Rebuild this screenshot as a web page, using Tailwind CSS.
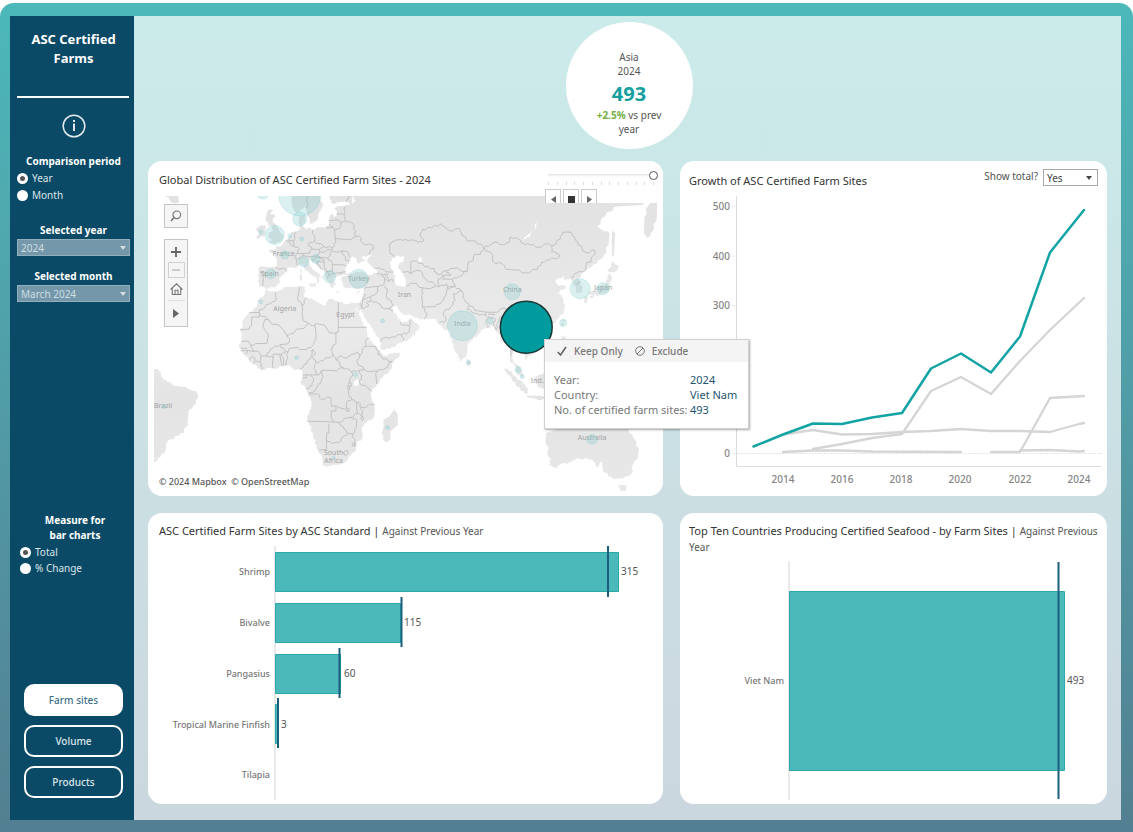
<!DOCTYPE html>
<html lang="en">
<head>
<meta charset="utf-8">
<meta name="viewport" content="width=device-width, initial-scale=1">
<title>ASC Certified Farms</title>
<script src="https://cdn.jsdelivr.net/npm/@tailwindcss/browser@4"></script>
</head>
<body class="bg-white pt-[3px] font-['Noto_Sans','Open_Sans',sans-serif] text-[10px] text-[#555]">
<div class="flex min-h-[calc(100vh-3px)] rounded-t-[14px] bg-linear-to-b from-[#4bb8b9] to-[#527f91] pt-[13px] pr-3 pb-3 pl-[10px]">

  <!-- Sidebar -->
  <aside class="flex w-[124px] shrink-0 flex-col bg-[#0b4a66] pt-[14px] pr-1 pb-[22px] pl-[7px] text-white">
    <h1 class="text-center text-[13px] leading-[19px] font-bold">ASC Certified Farms</h1>
    <hr class="mt-[28px] w-[112px] border-t-2 border-white">
    <button type="button" aria-label="Information" class="mt-4 self-center">
      <svg class="size-6" viewBox="0 0 24 24" fill="none" stroke="#dfe8ec"><circle cx="12" cy="12" r="10.8" stroke-width="1.5"/><path d="M12 9.5v7.5" stroke-width="2"/><path d="M12 6v2" stroke-width="2"/></svg>
    </button>
    <fieldset class="mt-4">
      <legend class="w-full text-center leading-[15px] font-bold">Comparison period</legend>
      <label class="mt-px flex h-[17px] items-center gap-1 text-[#dbe5ea]"><input type="radio" name="period" checked class="size-[11px] appearance-none rounded-full bg-white checked:border-[3px] checked:border-white checked:bg-[#555]">Year</label>
      <label class="flex h-[17px] items-center gap-1 text-[#dbe5ea]"><input type="radio" name="period" class="size-[11px] appearance-none rounded-full bg-white checked:border-[3px] checked:border-white checked:bg-[#555]">Month</label>
    </fieldset>
    <label for="year" class="mt-[19px] text-center leading-[15px] font-bold">Selected year</label>
    <div class="relative mt-px">
      <select id="year" class="h-[17px] w-full appearance-none border border-[#94afbc] bg-[#7498aa] px-[3px] text-[10px] leading-[14px] text-[#cfdde3]"><option>2024</option></select>
      <svg class="pointer-events-none absolute top-[7px] right-1 h-1 w-[6px]" viewBox="0 0 6 4"><path d="M0 0h6L3 4z" fill="#d5e0e5"/></svg>
    </div>
    <label for="month" class="mt-[13px] text-center leading-[15px] font-bold">Selected month</label>
    <div class="relative mt-px">
      <select id="month" class="h-[17px] w-full appearance-none border border-[#94afbc] bg-[#7498aa] px-[3px] text-[10px] leading-[14px] text-[#cfdde3]"><option>March 2024</option></select>
      <svg class="pointer-events-none absolute top-[7px] right-1 h-1 w-[6px]" viewBox="0 0 6 4"><path d="M0 0h6L3 4z" fill="#d5e0e5"/></svg>
    </div>
    <fieldset class="mt-[211px] pl-[3px]">
      <legend class="w-full text-center leading-[15px] font-bold">Measure for<br>bar charts</legend>
      <label class="mt-px flex h-4 items-center gap-1 text-[#dbe5ea]"><input type="radio" name="measure" checked class="size-[11px] appearance-none rounded-full bg-white checked:border-[3px] checked:border-white checked:bg-[#555]">Total</label>
      <label class="flex h-4 items-center gap-1 text-[#dbe5ea]"><input type="radio" name="measure" class="size-[11px] appearance-none rounded-full bg-white checked:border-[3px] checked:border-white checked:bg-[#555]">% Change</label>
    </fieldset>
    <nav class="mt-auto flex flex-col gap-[9px] px-[7px]">
      <button type="button" class="h-8 rounded-[10px] bg-white font-medium text-[#3d7288]">Farm sites</button>
      <button type="button" class="h-8 rounded-[10px] border-2 border-white font-medium text-[#dbe5ea]">Volume</button>
      <button type="button" class="h-8 rounded-[10px] border-2 border-white font-medium text-[#dbe5ea]">Products</button>
    </nav>
  </aside>

  <main class="min-w-0 flex-1 bg-linear-to-b from-[#cbebea] to-[#cbd7df] px-[14px] pb-[15px]">
    <div class="flex h-[145px] justify-center pt-[6px] pl-[3px]">
      <div class="flex size-[127px] flex-col items-center rounded-full bg-white pt-[28px] text-center leading-[14px]">
        <span>Asia</span>
        <span>2024</span>
        <strong class="mt-1 text-[20px] leading-6 text-[#139fa0]">493</strong>
        <p class="mt-[2px] w-[84px]"><b class="text-[#76b043]">+2.5%</b> vs prev year</p>
      </div>
    </div>

    <div class="grid grid-cols-[515fr_427fr] gap-[17px]">

      <!-- Map card -->
      <section class="relative rounded-[14px] bg-white px-[6px] pb-1">
        <h2 class="flex h-[35px] items-center pt-1 pl-[5px] text-[11px] text-[#333]">Global Distribution of ASC Certified Farm Sites - 2024</h2>
        <div class="relative">
          <svg id="map" class="block h-auto w-full" viewBox="154 196 504 296" role="img" aria-label="World map of certified farm sites">
            <linearGradient id="shade" gradientUnits="userSpaceOnUse" x1="0" y1="196" x2="0" y2="492"><stop offset="0" stop-color="#e2e2e2"/><stop offset=".45" stop-color="#eaeaea"/><stop offset=".7" stop-color="#e4e4e4"/><stop offset="1" stop-color="#e8e8e8"/></linearGradient>
            <g id="land" fill="url(#shade)"></g>
            <g id="water" fill="#fff"></g>
            <g id="borders" fill="none" stroke="#bebebe" stroke-width="0.9" stroke-linejoin="round"></g>
            <g fill="#a3a3a3" font-size="7" text-anchor="middle">
              <text x="284" y="256">France</text><text x="270" y="276">Spain</text><text x="359" y="281">Turkey</text>
              <text x="285" y="311">Algeria</text><text x="346" y="317">Egypt</text><text x="405" y="297">Iran</text>
              <text x="513" y="292">China</text><text x="463" y="326">India</text><text x="604" y="290">Japan</text>
              <text x="163" y="408">Brazil</text><text x="593" y="440">Australia</text><text x="538" y="383">Ind.</text>
              <text x="334" y="456">South</text><text x="334" y="464">Africa</text>
            </g>
            <g id="sites" fill="#7fcccc" fill-opacity="0.28" stroke="#7fcccc" stroke-opacity="0.3"></g>
            <circle cx="527" cy="327.500" r="26" fill="#009b9c" stroke="#1c3536" stroke-width="1.500"/>
          </svg>

          <button type="button" aria-label="Search" class="absolute top-[8px] left-[10px] grid size-6 place-items-center border border-[#c4c4c4] bg-[#f5f5f5]">
            <svg class="size-3" viewBox="0 0 12 12" fill="none" stroke="#777" stroke-width="1.2"><circle cx="6.800" cy="4.800" r="3.800"/><path d="M4 7.500 1 11" stroke-width="1.600"/></svg>
          </button>
          <div class="absolute top-[43px] left-[10px] flex h-[88px] w-6 flex-col items-center border border-[#c4c4c4] bg-[#f5f5f5] pt-[3px]">
            <button type="button" aria-label="Zoom in" class="grid h-[17px] w-4 place-items-center"><svg class="size-[10px]" viewBox="0 0 10 10"><path d="M5 0v10M0 5h10" stroke="#666" stroke-width="1.800"/></svg></button>
            <button type="button" aria-label="Zoom out" class="mt-[2px] grid h-4 w-[17px] place-items-center border border-[#d2d2d2]"><svg class="h-2 w-2" viewBox="0 0 8 8"><path d="M0 4h8" stroke="#bbb" stroke-width="1.500"/></svg></button>
            <button type="button" aria-label="Reset map" class="grid h-[22px] w-full place-items-center"><svg class="h-3 w-[13px]" viewBox="0 0 13 12" fill="none" stroke="#777" stroke-width="1.100"><path d="M.6 6.500 6.500.8l5.900 5.700M2.300 5.500v6h8.400v-6M5 11.500V7.200h3v4.300"/></svg></button>
            <button type="button" aria-label="Map tools" class="grid h-[25px] w-[17px] place-items-center border-t border-[#ddd]"><svg class="h-[9px] w-[6px]" viewBox="0 0 6 9"><path d="M0 0 6 4.500 0 9z" fill="#666"/></svg></button>
          </div>
          <p class="absolute bottom-[2px] left-1 bg-white/50 px-px text-[9px] leading-[14px] font-medium">© 2024 Mapbox&nbsp; © OpenStreetMap</p>

          <!-- Mark tooltip -->
          <div class="absolute top-[143px] left-[390px] z-10 w-[205px] border border-[#d0d0d0] bg-white text-[11px] text-[#777] shadow-[1px_1px_2px_#0005]">
            <div class="flex h-[22px] items-center bg-[#f4f4f4] pl-3 text-[10px] font-medium">
              <button type="button" class="flex items-center gap-[7px]"><svg class="size-[10px]" viewBox="0 0 10 10" fill="none" stroke="#666" stroke-width="1.600"><path d="M.8 6 3.500 9 9 1"/></svg>Keep Only</button>
              <button type="button" class="ml-3 flex items-center gap-[7px]"><svg class="size-[10px]" viewBox="0 0 10 10" fill="none" stroke="#777"><circle cx="5" cy="5" r="4.300"/><path d="m2 8 6-6"/></svg>Exclude</button>
            </div>
            <dl class="grid grid-cols-[136px_1fr] px-[9px] pt-[10px] pb-[11px] leading-[15px] whitespace-nowrap">
              <dt>Year:</dt><dd class="text-[#1d5570]">2024</dd>
              <dt>Country:</dt><dd class="text-[#1d5570]">Viet Nam</dd>
              <dt>No. of certified farm sites:</dt><dd class="text-[#1d5570]">493</dd>
            </dl>
          </div>
        </div>

        <!-- Year player, laid over the top right corner of the map -->
        <div class="absolute top-0 right-0 h-[42px] w-[118px] overflow-hidden rounded-tr-[14px] bg-white">
          <div class="relative mt-[10px] mr-[5px] h-[9px]">
            <input type="range" aria-label="Year" min="2012" max="2024" value="2024" class="ml-[3px] block h-[9px] w-[110px] appearance-none bg-linear-to-b from-transparent from-[3px] via-[#e2e2e2] via-[3px] to-transparent to-[6px] [&::-webkit-slider-thumb]:size-[9px] [&::-webkit-slider-thumb]:appearance-none [&::-webkit-slider-thumb]:rounded-full [&::-webkit-slider-thumb]:border [&::-webkit-slider-thumb]:border-[#555] [&::-webkit-slider-thumb]:bg-white">
          </div>
          <div class="mt-[2px] mr-[9px] ml-[3px] flex h-[3px] justify-between" aria-hidden="true">
            <i class="w-px bg-[#ddd]"></i><i class="w-px bg-[#ddd]"></i><i class="w-px bg-[#ddd]"></i><i class="w-px bg-[#ddd]"></i><i class="w-px bg-[#ddd]"></i><i class="w-px bg-[#ddd]"></i><i class="w-px bg-[#ddd]"></i><i class="w-px bg-[#ddd]"></i><i class="w-px bg-[#ddd]"></i><i class="w-px bg-[#ddd]"></i><i class="w-px bg-[#ddd]"></i><i class="w-px bg-[#ddd]"></i><i class="w-px bg-[#ddd]"></i>
          </div>
          <div class="mt-1 flex gap-[2px]">
            <button type="button" aria-label="Previous" class="grid h-5 w-4 place-items-center border border-[#ccc]"><svg class="h-[7px] w-[5px]" viewBox="0 0 5 7"><path d="M5 0v7L0 3.500z" fill="#666"/></svg></button>
            <button type="button" aria-label="Stop" class="grid h-5 w-4 place-items-center border border-[#ccc]"><svg class="size-[7px]" viewBox="0 0 7 7"><path d="M0 0h7v7H0z" fill="#333"/></svg></button>
            <button type="button" aria-label="Next" class="grid h-5 w-4 place-items-center border border-[#ccc]"><svg class="h-[7px] w-[5px]" viewBox="0 0 5 7"><path d="M0 0v7l5-3.500z" fill="#666"/></svg></button>
          </div>
        </div>
      </section>

      <!-- Growth card -->
      <section class="rounded-[14px] bg-white">
        <div class="flex h-[35px] items-start justify-between pr-[9px] pl-[9px]">
          <h2 class="pt-3 text-[11px] leading-4 text-[#333]">Growth of ASC Certified Farm Sites</h2>
          <div class="flex items-start gap-[5px] pt-2">
            <label for="total" class="leading-[14px]">Show total?</label>
            <div class="relative">
              <select id="total" class="block h-[17px] w-[55px] appearance-none border border-[#aaa] bg-white px-[3px] text-[10px] leading-[14px] text-[#444]"><option>Yes</option></select>
              <svg class="pointer-events-none absolute top-[7px] right-[6px] h-1 w-[6px]" viewBox="0 0 6 4"><path d="M0 0h6L3 4z" fill="#444"/></svg>
            </div>
          </div>
        </div>
        <svg class="block h-auto w-full" viewBox="0 0 427 300" role="img" aria-label="Certified farm sites by year">
          <g stroke="#dcdcdc"><path d="M56.500 0v270.500H421" fill="none"/><path d="M52 10.500h4M52 60h4M52 109.500h4M52 257.500h4" stroke="#eee"/><path d="M57 257.500h365" stroke="#e6e6e6" stroke-dasharray="2 1"/></g>
          <g fill="#858585" font-size="10" font-weight="500" text-anchor="end"><text x="50" y="14">500</text><text x="50" y="64">400</text><text x="50" y="113">300</text><text x="50" y="261">0</text></g>
          <g fill="#858585" font-size="10" font-weight="500" text-anchor="middle"><text x="103" y="287">2014</text><text x="162" y="287">2016</text><text x="221" y="287">2018</text><text x="280" y="287">2020</text><text x="340" y="287">2022</text><text x="399" y="287">2024</text></g>
          <g fill="none" stroke="#d5d5d5" stroke-width="2.300" stroke-linecap="round" stroke-linejoin="round">
            <path d="M133 253 162 248 192 242 222 238 251 195 281 181 311 198 340 165 370 134 404 102"/>
            <path d="M103 238.500 133 234 162 238.500 192 238 222 236 251 235 281 233 311 235 340 235 370 236 399 228 404 227"/>
            <path d="M311 256H340L370 202 404 200"/>
            <path d="M103 256 133 254.500 162 254.500 192 255.500 281 256"/>
            <path d="M340 254.500 370 254 399 255.500 404 255"/>
            <path d="M73.500 250.500 103 238.500 133 227.500 162 228 192 221.500 222 217 251 172.500 281 157.500 311 176.500 340 140.500 370 56.500 404 14" stroke="#12a3a4" stroke-width="2.500"/>
          </g>
        </svg>
      </section>

      <!-- Standards card -->
      <section class="rounded-[14px] bg-white">
        <h2 class="h-[32px] pt-[10px] pl-[11px] text-[11px] leading-4 text-[#333]">ASC Certified Farm Sites by ASC Standard | <span class="text-[10px] text-[#555]">Against Previous Year</span></h2>
        <svg class="block h-auto w-full" viewBox="148 545 515 259" role="img" aria-label="Farm sites by ASC standard">
          <path d="M275 546v254" stroke="#e2e2e2" stroke-width="1.500"/>
          <g fill="#4bb8ba" stroke="#2aa9aa"><path d="M275.500 552.500h343v39h-343zM275.500 603.500h125v39h-125zM275.500 654.500h65v39h-65zM275.500 704.500h3v39h-3z"/></g>
          <path d="M608 546v51M401.500 597v50M339.500 648v50M278 698v50" stroke="#1a5f7c" stroke-width="2"/>
          <g font-size="9" font-weight="500" fill="#777" text-anchor="end"><text x="270" y="575">Shrimp</text><text x="270" y="626">Bivalve</text><text x="270" y="677">Pangasius</text><text x="270" y="728">Tropical Marine Finfish</text><text x="270" y="778">Tilapia</text></g>
          <g font-size="10" fill="#555"><text x="621" y="575">315</text><text x="404" y="626">115</text><text x="344" y="677">60</text><text x="281" y="728">3</text></g>
        </svg>
      </section>

      <!-- Countries card -->
      <section class="rounded-[14px] bg-white">
        <h2 class="h-[47px] pt-[10px] pr-2 pl-[9px] text-[11px] leading-4 text-[#333]">Top Ten Countries Producing Certified Seafood - by Farm Sites | <span class="text-[10px] text-[#555]">Against Previous Year</span></h2>
        <svg class="block h-auto w-full" viewBox="680 560 427 244" role="img" aria-label="Top countries by farm sites">
          <path d="M789 561v239" stroke="#e2e2e2" stroke-width="1.500"/>
          <path d="M789.500 591.500h275v179h-275z" fill="#4bb8ba" stroke="#2aa9aa"/>
          <path d="M1058.500 562v237" stroke="#1a5f7c" stroke-width="2"/>
          <text x="784" y="684" font-size="9" font-weight="500" fill="#777" text-anchor="end">Viet Nam</text><text x="1067" y="684" font-size="10" fill="#555">493</text>
        </svg>
      </section>
    </div>
  </main>
</div>

<script>
// Outlines are lists of "lon,lat" pairs, drawn in a Mercator projection.
const project = (lon, lat) => [280 + 2.345 * lon, 380.5 - 134.4 * Math.log(Math.tan(Math.PI / 4 + lat * Math.PI / 360))];
// Slanted segments get two small bends so that they read as natural coast or river lines.
const rough = pts => pts.flatMap(([x, y], i) => {
  if (!i) return [[x, y]];
  const [px, py] = pts[i - 1], dx = x - px, dy = y - py;
  if (Math.abs(dx) < 1.2 || Math.abs(dy) < 1.2) return [[x, y]];
  const k = i % 2 ? 0.1 : -0.1;
  return [[px + dx * 0.3 - dy * k, py + dy * 0.3 + dx * k], [px + dx * 0.65 + dy * k, py + dy * 0.65 - dx * k], [x, y]];
});
const toPath = (s, closed) => 'M' + rough(s.trim().split(/\s+/).map(p => project(...p.split(',').map(Number)))).map(p => p.map(v => v.toFixed(1)).join(' ')).join('L') + (closed ? 'Z' : '');
const land = [
'5,66 5,62 5,60.5 5.5,59 7,58 8.5,58.3 10.5,59.3 11.2,59 11.5,58 12.8,56 13,55.4 14.3,55.5 16,56.3 16.7,57.8 17.5,58.8 18.8,59.8 17.2,60.7 17.3,62 18,63 22,66 21.3,63 21.3,61 22.8,59.9 25,60.2 28,60.5 30,59.9 28,59.5 24.5,59.4 23.5,58.8 24.4,58.3 24.2,57.2 23.3,57 22.6,57.7 21.5,57.4 21,56.2 21,55.2 19.8,54.5 18.6,54.5 16.5,54.5 14.2,53.9 12.5,54.4 11,54 10.8,54.4 9.9,54.9 10.9,56.4 10.5,57.6 8.2,56.8 8.1,55.5 8.9,54 7,53.5 5,53.3 4,52 3.5,51.4 1.6,50.8 1.5,50.1 0.2,49.6 -1.2,49.4 -1.8,49.7 -1.5,48.7 -4.7,48.5 -4.2,47.9 -2.5,47.3 -1.2,46 -1.3,44 -1.8,43.4 -4,43.4 -8,43.7 -9.2,43 -8.8,41.5 -9.4,38.8 -8.8,38.3 -8.9,37 -7,37.2 -6.2,36.4 -5.4,36.1 -4.5,36.7 -2.2,36.8 -0.7,37.7 0.1,38.7 -0.3,39.5 1,41 3.2,41.9 3.1,43 4.5,43.4 6.5,43.1 8.2,44 9,44.4 10.2,43.9 10.5,42.9 12.3,41.7 14,40.8 15.7,40 16.1,38.8 15.7,38 16.5,38.4 17.1,39 16.6,39.7 17,40.5 18.4,39.9 18.4,40.3 16,41.6 16,41.9 14.2,42.4 13.5,43.6 12.4,44.3 12.4,45.4 13.7,45.7 13.7,45 15,44.8 15.2,44.2 16.5,43.4 18.5,42.4 19.5,41.6 19.4,40.6 20.3,39.4 21.3,38.2 21.6,36.9 22.5,36.5 23.1,36.5 23,37.5 24,37.7 23.2,38.8 22.8,39.4 23.5,40.2 24.2,40.4 26,40.9 28,41 29,41 26.2,40 26.7,38.5 27.3,37 29,36.3 30.6,36.8 32.5,36.1 34,36.3 36,36.7 35.8,35 35,33 34.3,31.4 32.5,31.2 31,31.5 29,30.9 25,31.6 23,32.6 21.6,32.9 20,32 20,30.8 19,30.3 17,31 15.4,32.2 13,32.9 11,33.3 10,34.2 11,35.3 10.5,36.5 10.9,37 9.7,37.3 7,37 3,36.9 0,35.9 -2,35.1 -5.3,35.8 -6,35.8 -6.8,34 -9,32.5 -9.8,30.5 -11.5,28.2 -13.5,27.5 -15,25.5 -17,21 -16.2,19.5 -16.5,16 -17.5,14.7 -16.7,12.5 -15,10.8 -13.3,9 -13,8 -11.3,6.8 -7.6,4.4 -4,5.2 -2,4.8 1,5.9 4.3,6.4 6,4.3 8.5,4.7 9.5,4 9.8,2.5 9.3,0 8.8,-0.8 11,-3.5 12.2,-5.8 13.2,-8.6 13.8,-10.8 12.6,-13 11.8,-16.5 12.5,-18.5 14.4,-22.4 15,-26.2 16.5,-28.6 18.2,-31.8 18.4,-34 20,-34.8 22.5,-34 25.7,-34 28,-33 30.5,-30.5 32.5,-28.5 32.9,-26 35.4,-24 35.4,-22 34.8,-20 37,-17.8 40,-16 40.6,-14.5 40.5,-10.8 39.4,-8 38.8,-6.2 39.3,-4.6 41.5,-1.8 44,1.2 47,4 49,8 51.2,10.5 51.2,11.9 48,11.2 44.5,10.4 43.2,11.7 43.2,12.4 40,15 37.5,18.5 37.2,21 35.6,24 34,26.5 32.6,29.8 33.5,28.5 34.3,27.9 35,29.5 34.9,28 37,25 39,22 40.8,19.8 42.7,16.5 43.5,12.9 45,12.9 48,14 52,15.7 55,17.2 57.8,19 59.8,22.4 58.5,23.7 56.5,24.7 56.3,26.2 54.5,24.2 51.7,24.1 51.4,25.8 50.8,25 50,26.6 48.5,28.5 48,30 50,30.2 51,28.5 53,26.8 56,27 57.3,25.7 61,25.2 66.5,25.3 67.3,24 69,22.3 70.5,20.8 72.7,21 72.8,19 73.5,16 74.8,13 76.4,9.5 77.5,8.1 78.2,9 79.8,10.3 80.2,13.5 80.2,15.5 82.3,16.7 85,19.5 87,21.4 89,21.8 91,22.6 92.3,20.8 94.3,18.3 94.3,16 96.5,16.6 97.6,16.5 98.6,12 98.3,8.3 100.3,6.2 101.3,2.9 103.5,1.3 104.2,1.4 103.4,4.5 102,6.2 100.4,7.3 99.2,9.3 99.8,11.5 100,13.4 101,13.3 102.5,12 104.8,10.4 104.8,8.6 106.8,10.4 109,11.5 109.3,13.5 107.5,16.5 105.7,19 106.7,20.7 108.5,21.7 110,21.2 110.4,20.4 110.8,21.4 114,22.4 117,23.5 119.3,25.5 121.6,28.5 121.8,30.8 120.5,33.5 119.3,35 122.4,37 121,37.7 119,37.3 117.8,39 121.5,40.8 121.3,39 124.3,40 125.2,38 126.6,37 126.4,34.5 129,35.2 129.4,37 127.5,39.6 130,42 132,43.2 135.5,44.5 138.5,47 140.5,50 141,53 137.5,54 135.5,54.7 139,57.2 143,59.3 149,59.5 155,59.7 156.5,61.3 160,61.9 163,62.5 164,66',
'160,61 163.9,60.8 163.5,59.5 162,58 161,56 158.5,53 156.7,51 155.7,54 155.8,57 157.5,59.5',
'-5,58.6 -3,58.6 -4,57.6 -2,57.5 -3,56 -1.6,55 -0.3,54 0.3,53 1.7,52.7 1,51.5 1.3,51.1 -1,50.7 -5.3,50.1 -3,51.3 -5,51.8 -4.5,53.2 -3,53.5 -3.4,54.8 -5,55 -6,57',
'-6,54.9 -8.3,55 -10,54 -9,53 -10,51.7 -6.4,52.2',
'8.5,41 9.6,41 9.4,39.2 8.5,39','8.8,42.6 9.5,42.9 9.4,41.5 8.8,41.8','12.5,38 15.6,38.2 15.1,36.7 12.6,37.6','23.6,35.5 26.2,35.2 24.8,34.9','32.4,35 34.4,35.6 33.5,34.7',
'-54.5,5.5 -51.5,4 -50,1 -48,-0.8 -44,-2.5 -41,-2.9 -38,-4 -35.3,-5.3 -34.8,-7.5 -37,-11 -39,-13.5 -39.3,-17.5 -41,-22 -44.5,-23.2 -48.5,-26 -48.7,-28.5 -51,-31.2 -53.5,-33 -56,-33',
'-50,64 -49,61.5 -45,60 -43,60.2 -41.5,64',
'49.3,-12 50.4,-15.5 47.2,-25 45,-25.5 43.4,-22 44.4,-20 44.3,-16.5 46.5,-15.7',
'79.8,9.7 81.8,7.5 81,6 80,6.4',
'95.3,5.5 98,4 101,1.5 104,-1.5 106,-3.5 105.8,-5.9 103,-4.5 100.5,-1 97.5,2.3',
'105.3,-6.7 108.5,-6.6 112.5,-6.8 115,-7.9 115,-8.6 109,-7.8 106,-7.4',
'109,1.5 110,1.7 113,3.2 117,7 119,5 117.5,1 116,-4 112,-3.4 110.2,-2.8 109,0',
'108.7,19.3 110.9,20 110.3,18.6 109,18.3','120.2,23.3 121.5,25.3 121.9,24.6 120.8,22','120.5,18.4 122.1,18.4 121.5,15 120,15.5',
'142.5,54.3 143.3,52 143,49.3 142.8,47.5 142,46 142,48 141.8,51 142,53.5',
'141.8,45.4 143.5,44.1 145.3,43.5 143.3,42 141,41.6 140,42.5 141.4,43.3',
'141.3,41.4 142,39.6 141,38.2 140.8,35.8 139.5,35 137,34.6 135.8,33.5 135,34.6 131,34 132.6,35.4 135.5,35.6 137,37.3 138.8,37.8 140,39.5 140.2,41',
'130,33.6 131.8,33.6 131.3,31.3 130.2,31.3','132.3,33.8 134.5,34.2 134,33.3 132.8,32.9',
'113.7,-22 113.5,-26 115.7,-32 115,-34.2 118,-35 120,-33.9 124,-33 126,-32.3 131,-31.5 134.2,-32.8 135.6,-34.8 137.8,-32.7 138,-35.5 140.5,-38 143.5,-38.8 147,-38.5 150,-37.3 151.3,-33.5 153,-31 153.5,-28 151,-24 149,-20.5 146,-19 143,-14 136,-12 126,-14 120,-20',
'144.7,-40.8 148.2,-40.9 147.8,-43.3 146,-43.3'
];
const water = [
'28,41.8 28,43.5 29.7,45 31,46.6 33,46 32.5,45.4 33.6,44.5 35.5,45.1 36.5,45.3 35,46.3 38,47 39.2,47.1 37.8,46 37,45.2 39,44 41.5,42.5 41.5,41.5 38,41 35,42 32,41.7 29,41.2',
'47,45 49,46.5 53,46.9 53,45.2 51,44.5 50.5,43 52.8,41.5 53.8,39 53.8,37 50,37.4 48.8,38.5 49.5,40.5 47.6,43',
'104,51.5 107,52.1 109.8,55.7 108.3,53.8','31.7,-0.5 33.3,0.3 34.2,-1 33,-2.5 31.8,-2.4','58.5,45 60,46.5 61.3,45.2','31,60 32.5,60.6 31,61.5'
];
const borders = [
'-2,35.1 -1.5,32.5 -4,31 -8.7,28.7 -8.7,27.3','-13,27.7 -8.7,27.7','-8.7,27.3 -8.7,26 -12,26 -12,23.5 -13,21.3 -17,21',
'-8.7,27.3 -4.8,25 -6.5,25 -5.5,15.5 -9.5,15.4 -12,14.8 -14,16.5 -16.4,16.2','-4.8,25 1.2,21.1 3.2,19 5.8,19.5 12,23.5 10,25 9.5,27 9.8,29.5 9.5,30.2 7.6,33.3 8,34.5 8.5,37','9.5,30.2 11.5,33.2',
'25,31.6 25,20 24,20 24,19.5 16,23.4 14,22.7 12,23.5','25,22 37,22','15,23 15.5,20 15.5,17 13.5,14.2','24,19.5 24,15.7 22.5,14 22,12.5 22.9,11','13.5,13.7 10,13 6,13.7 4,13.4 3.6,12 2.7,8 2.7,6.4',
'3.2,19 4.2,16.5 3.5,15.3 0.2,15 -3,13.5 -5.4,11.5 -5.5,10.3','0.9,11 1.6,8 1.7,6.3','0,11 0.5,8 1.1,6.1','3.6,12 2.4,12 0.9,11 -2.8,11 -2.8,9.6 -5.5,10.3','-2.8,9.6 -3.2,6.5 -2.8,5.1','0.2,15 2.4,12',
'-5.5,10.3 -8,10.2 -8.2,8 -8.4,7.5 -7.5,5.5 -7.5,4.4','-8,10.2 -9,12.3 -11.4,12.2 -12.2,14.8','-11.4,12.2 -13.7,12.6 -16.7,12.4','-13.7,12.6 -13.8,11.6 -15,11','-13.2,9 -11.2,10 -10.3,8.5 -11.4,6.9','-10.3,8.5 -8.4,7.5','-16.7,13.5 -13.9,13.4',
'14.1,13 13.5,10.5 11.5,7 8.6,4.8','14.1,13 15.2,11 14,10 15.5,7.5','15.5,7.5 18.5,8.2 22.9,11 24,8.7 27.4,5.1 22.5,4.1 18.5,4.3 16.2,2.2 14.5,5 15.5,7.5','9.8,2.3 13.3,2.2 16.2,2.2','13.3,2.2 14.4,0.5 13.8,-2.4 11.2,-3.8','9.8,1 11.3,1 11.3,2.2','18.5,4.3 17.8,0 16,-3.3 14.5,-4.9 12.3,-5.8',
'12.5,-6 16.5,-5.9 17.5,-8 21.8,-7.4 22,-11 24,-11 25.5,-11.7 27.5,-12.2 29.5,-13.3 29.7,-12.2 28.5,-11.9 28.6,-9.2 30.8,-8.3','24,-11 24,-13 22,-13 22,-16.3 23.4,-17.6','11.8,-17.3 18.5,-17.4 23.4,-17.6 25.3,-17.8','21,-18.3 21,-22 20,-22 20,-28.4 16.5,-28.6','20,-24.8 22,-26 25.5,-25.6 27,-23.6 29.4,-22.2','25.3,-17.8 27.5,-20.5 29.4,-22.2','25.3,-17.8 28.9,-15.9 30.4,-15.7 32.9,-16.8 32.7,-20 31.3,-22.4 29.4,-22.2','31.3,-22.4 32,-25.9 32.8,-26.9','27.1,-29.6 28.7,-28.6 29.4,-29.6 28,-30.6 27.1,-29.6','31,-26 32,-26 32,-27.2 31,-27 31,-26',
'30.4,-15.7 33.2,-14 32.8,-11.5 33,-9.4 30.8,-8.3','33.2,-14 34.5,-14.5 35.3,-17.1 35.8,-16 34.6,-12 34.6,-11.5 34,-9.5 33,-9.4','34.6,-11.5 40.4,-10.5','30.8,-8.3 29.4,-6 29.3,-4.4 30.5,-2.4 30.4,-1.1','29,-2.7 30.8,-2.4','29.3,-4.4 29,-2.7 29.6,-1.3 30.4,-1.1','29.6,-1.3 30,0.8 31.2,2.2 30.8,3.6 34,4.2 34.9,1 34,-1','34,-1 37.7,-3.5 39.2,-4.6','41.5,-1.7 41,2.8 41.9,4','34,4.2 36,4.4 38,3.6 41.9,4 45,5 48,8 44,9 42.7,11','36,4.4 33,7.8 34.2,10.5 36.4,14.2 37.5,14.2 40,14.4 42.4,12.4 41.8,11 42.9,11','36.4,14.2 37,17 38.5,18','24,8.7 26,10.3 28,9.4 30,10.2 33,12 34.2,10.5','27.4,5.1 29.5,4.5 30.8,3.6',
'-8.8,41.9 -6.3,41.7 -7,39.7 -7.3,37.2','-1.8,43.4 3.1,42.4','7.5,43.8 7,45.9 6.2,46.3 7.5,47.5 8.2,49 6.2,49.5 2.6,51.1','3.4,51.3 5.9,51 6.2,49.5','5.9,51 6.9,53.3','7.5,47.5 9.6,47.5 10.4,46.8 7,45.9','9.6,47.5 13,47.6 12.8,48.2 13.8,48.7 16.9,48.6 17.1,48 16.1,46.8 13.7,46.5 10.4,46.8','13.8,48.7 12.1,50.3 14.8,50.9 18.8,49.5 16.9,48.6','14.2,53.9 14.8,50.9','18.8,49.5 22.5,49.1 22.2,48.4 17.1,48','22.5,48.2 20.5,46.2 16.3,46.4','13.6,45.5 16.3,46.4 18.9,45.8 19,44.9 16,45.1 16.2,44.2 18.5,42.5','20.5,46.2 22.5,44.6 22.4,42.3 20.5,42 19,43 19,44.9','19.4,41.9 20.5,42 21,40.8 20,39.7','21,40.8 23,41.4 26.2,41.7 26.1,40.8','22.4,42.3 23,41.4','26.2,41.7 28,42','22.5,44.2 27,44.1 28.6,43.7','22.5,48.1 24.8,47.8 26.6,48.3 28.2,45.5 29.7,45.3','26.6,48.3 29,48 30,46.4',
'22.5,49.1 24,50.7 23.6,52 23.5,53.9 22.8,54.4 19.8,54.4','23.6,51.6 30.5,51.3 31.8,52.1 34,52.3 35.5,50.4 40,49.6 38.3,47.2','31.8,52.1 32.5,53.5 30.8,55.6 28.2,56.1 26.6,55.7 25.5,54.2 23.5,53.9','21,56.1 24.5,56.3 26.6,55.7','24.4,57.9 27.4,57.5 28.2,56.1','27.4,57.5 28,59.4','28,60.5 31,62.5','11.4,59 12.2,61.5 12,64','22.8,54.4 21.2,55.3',
'40,43.4 43.5,42.7 46.5,41.9 48.5,41.9','41.5,41.5 43.5,41.1 46.5,41.2','43.5,41.1 44.8,39.7 46.5,38.9 48,39.6 48.8,38.4','45,41.2 46.5,39.5 46.5,38.9','44.8,39.7 44.5,37.7 42.4,37.2 38,36.8 36.7,36.8 36,36','44.8,37.2 46,35.8 45.5,34 48,31 48.5,30','42.4,37.2 41.2,34.7 38.8,33.4 35.7,32.7 36.5,34.5','38.8,33.4 39,32.1 37,31.5 38,30.5 36,29.2 35,29.4 35.5,32.7','39,32.1 42,31.1 44.7,29.2 46.5,29.1 48.4,28.5','46.5,29.1 48,30','42.8,16.4 44,17.4 48,18.2 52,19 55,20 55.7,22 55.2,22.7 52,23 51.3,24.3','52,19 53,16.7','55.2,22.7 56.2,24.8','34.3,31.3 34.9,29.5',
'53.9,37.3 57,38.2 61.2,36.6 60.6,34 61,31.5 60.9,29.8 63.2,27.2 61.6,25.2','60.9,29.8 66.3,29.9 69.3,31.9 71,34 71.5,36.3 74.8,37.2','61.2,36.6 64.5,36.3 66.5,37.4 68,37 71.3,38 71.6,36.7 74.8,37.2','66.5,37.4 62,40 60,42.2 58,42.5 56,41.3 56,45 58.5,45.5 62,43.5 66,43 66,42 68,41.1 71,42.3','52.5,41.8 54.8,42 56,41.3','71,42.3 73,40.8 70.5,40.9 67.5,39.4 68,37','70.5,40.9 69.5,39.6 73.8,39.5','71,42.3 74,43 80.2,42.2','74.8,37.2 73.8,39.5 76.5,40.4 80.2,42.2 80.5,45 82.5,45.3 83,47.2 85.7,47.2 87.3,49.1',
'49,46.3 47,48 47,50.3 49,51 51.5,51.5 55,51 57,51.4 59,50.6 61.5,51 60,52.5 61,54 65,54.4 69,55.4 71,54.2 73,53.6 76.5,54.2 77.5,53.3 80,51 83.5,51 87.3,49.1 90,50 92,50.7 95,50 98,50.5 98.5,52.1 102,51.4 104,50.3 107,49.9 111,49.3 114,50.2 116.7,49.8 119.9,51.5 120.8,53.3 124,53.3 126,52 127.5,50 131,47.7 134.7,48.4 133,45 131,44.8 130.6,42.4','87.3,49.1 91,46.9 91,45.1 95.5,44.2 97,42.7 101,42.5 105,41.6 110,42.7 112,44.9 115,45.5 119.7,46.7 118,47.9 116,48 116.7,49.8','124.4,40 127,41.6 130.6,42.4','126.5,37.8 128.4,38.6',
'74.8,37.2 77.8,35.5 79,32.5 81,30.2 85,28.3 88,27.9 92,27.8 96,29.4 97.3,28.2 98.7,27.5 97.6,24 99,22 101.2,21.5 102.2,22.5 105.3,23.3 108,21.6','77.8,35.5 74,34.5 75,32.3 73,29.8 70,27.8 71,24.5 68.3,23.8','81,30.2 80,28.8 84,27.4 88,26.4 88,27.9','89,27.2 92,26.9','88.9,21.8 88.2,24.5 89,26.3 92.3,25 91.3,23.5 92.4,20.9','92.4,21 93.3,24 97.3,28.2','100.1,20.4 97.5,18.5 98.8,14 98.7,10.3','100.1,20.4 101.2,17.6 104,18.2 105.5,14.4 102.5,13.5 102.8,11.7','102.2,22.5 104.5,19.5 107.5,15 106,11'
];
// Bubble position and radius on the map, one per country.
const sites = [[300,195,21],[300,219,7],[275,235,9.5],[304,262,5],[316,259,4.5],[330,277,6],[359,279,9.5],[263,193,6],[285,255,4],[271,274,5],[261,232,2],[302,239,2],[290,236,2],[261,302,2],[383,321,2],[297,358,2],[356,375,2],[388,428,2],[164,407,2],[334,458,1.5],[513,292,8],[463,326,15],[581,289,10],[604,289,6],[564,323,3.5],[491,321,3],[469,363,2],[519,370,3],[523,377,2],[593,440,5]];
const fill = (id, html) => document.getElementById(id).innerHTML = html;
fill('land', land.map(s => `<path d="${toPath(s, true)}"/>`).join(''));
fill('water', water.map(s => `<path d="${toPath(s, true)}"/>`).join(''));
fill('borders', borders.map(s => `<path d="${toPath(s)}"/>`).join(''));
fill('sites', sites.map(([x, y, r]) => `<circle cx="${x}" cy="${y}" r="${r}"/>`).join(''));
</script>
</body>
</html>
